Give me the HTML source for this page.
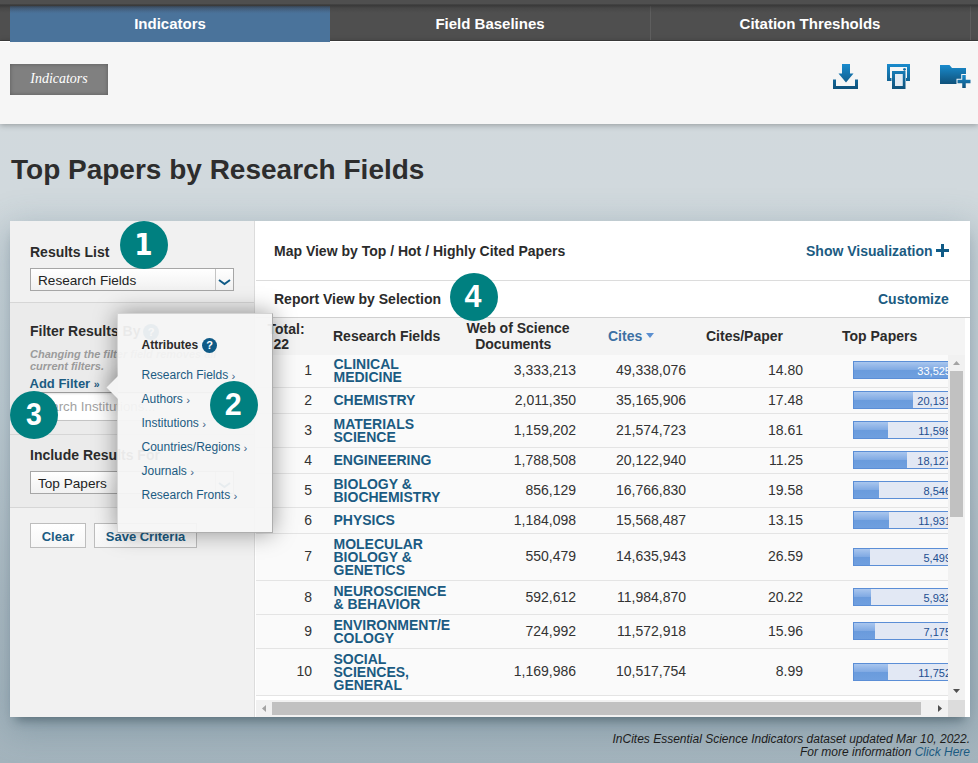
<!DOCTYPE html>
<html>
<head>
<meta charset="utf-8">
<title>Top Papers by Research Fields</title>
<style>
*{box-sizing:border-box;margin:0;padding:0}
html,body{width:978px;height:763px;overflow:hidden}
body{font-family:"Liberation Sans",Arial,sans-serif;color:#2b2b2b;position:relative;
background:linear-gradient(180deg,#d2d9dd 0px,#d1d9dd 200px,#c5d0d6 400px,#b0bdc5 600px,#a4b4bd 763px);}
.abs{position:absolute}
a{color:#1b5b82;text-decoration:none}
#topstrip{left:0;top:3.500px;width:978px;height:9px;background:linear-gradient(rgba(40,40,40,.15) 0,rgba(40,40,40,.55) 1px,rgba(40,40,40,.5) 2px,rgba(40,40,40,.2) 4px,rgba(40,40,40,0) 9px);z-index:3}
#tabbar{left:0;top:0;width:978px;height:41px;background:#4f4f4f;border-bottom:1px solid #3e3e3e}
.tab{top:6px;height:34px;width:320px;text-align:center;color:#fff;font-weight:bold;font-size:15px;line-height:35px}
.tab.active{background:linear-gradient(#46607d 0,#4a6f96 5px,#4a739b 8px);height:36px;z-index:2}
.tabsep{top:6px;height:34px;width:1px;background:#5e5e5e}
#whitebar{left:0;top:41px;width:978px;height:83px;background:#f6f6f6;border-top:1px solid #fff;box-shadow:0 1px 6px rgba(0,0,0,.3)}
#badge{left:10px;top:64px;width:98px;height:31px;background:#808080;color:#fff;font-family:"Liberation Serif",serif;font-style:italic;font-size:14px;line-height:30px;text-align:center;box-shadow:inset 0 0 4px rgba(0,0,0,.3)}
h1{left:11px;top:151.500px;font-size:28px;line-height:36px;font-weight:bold;color:#2d2d2d;white-space:nowrap}
#panel{left:10px;top:221px;width:960px;height:496px;background:#fff;box-shadow:0 9px 10px -6px rgba(20,40,50,.42),0 10px 34px 4px rgba(60,95,115,.3)}
#side{left:0;top:0;width:245px;height:496px;background:#f1f1f1;border-right:1px solid #dcdcdc}
#side .mid{left:0;top:82px;width:244px;height:204px;background:#ebebeb}
.lbl{font-weight:bold;font-size:14px;line-height:16px;color:#2b2b2b;white-space:nowrap}
.sel{left:20px;width:204px;height:23px;border:1px solid #a6a6a6;background:linear-gradient(#fff,#f1f1f1);font-size:13.6px;line-height:23px;padding-left:7px;color:#222;white-space:nowrap}
.sel .arr{position:absolute;right:0;top:0;width:18px;height:21px;border-left:1px solid #c4c4c4}
.sel svg{position:absolute;left:2px;top:9.700px}
.hr{left:0;width:244px;height:1px;background:#d6d6d6}
.btn{height:25px;border:1px solid #bdbdbd;background:linear-gradient(#fff,#f6f6f6);color:#1b5b82;font-weight:bold;font-size:13px;line-height:25px;text-align:center}
.circle span{display:inline-block}
.circle .lib{font-family:"Liberation Sans",sans-serif;font-size:30.500px}
.circle{width:48px;height:48px;border-radius:50%;background:#008080;color:#fff;font-weight:bold;font-size:30px;line-height:48px;text-align:center;font-family:"DejaVu Sans","Liberation Sans",sans-serif;z-index:20}
#pop{left:107px;top:92px;width:156px;height:220px;background:rgba(245,245,245,.94);box-shadow:0 0 22px rgba(0,0,0,.4);border:1px solid rgba(150,150,150,.75);border-left-color:rgba(150,150,150,.3);border-top-color:rgba(150,150,150,.35);z-index:10}
#pop .t{left:23.500px;top:24px;font-weight:bold;font-size:12px;line-height:14px;color:#2b2b2b}
#pop a{position:absolute;left:23.500px;margin-top:0;font-size:12px;line-height:14px;color:#1b5b82;white-space:nowrap}
#pop a span{font-size:11.500px;color:#3d5f85;position:relative;top:1px}
#poparrow{left:78px;top:133px;width:30px;height:66px;z-index:11;overflow:hidden}
#poparrow i{position:absolute;left:21.500px;top:24.500px;width:17px;height:17px;background:#f4f4f4;transform:rotate(45deg);box-shadow:0 0 22px rgba(0,0,0,.45)}
#main{left:246px;top:0;width:714px;height:496px;background:#fff}
.mh{font-weight:bold;font-size:14px;line-height:16px;white-space:nowrap}
#thead{left:0;top:96px;width:709px;height:38px;background:#f4f4f4;border-top:1px solid #d0d0d0}
#thead .h{position:absolute;font-weight:bold;font-size:14px;line-height:16px;color:#2b2b2b;white-space:nowrap}
#rows{left:0;top:0;width:692px;height:479px;overflow:hidden}
.row{position:absolute;left:-246px;width:938px;border-bottom:1px solid #e4e4e4;background:#fafafa;font-size:14px;color:#333}
.row span{position:absolute;top:0;text-align:right;white-space:nowrap}
.row .n{left:246px;width:56px}
.row .f{position:absolute;left:323.500px;font-weight:bold;font-size:14px;line-height:13px;color:#1b5b82;white-space:nowrap}
.row .d{left:446px;width:120px}
.row .ci{left:556px;width:120px}
.row .cp{left:673px;width:120px}
.bar{position:absolute;left:843px;width:110px;height:18px;border:1px solid #5b8ed6;background:#e2e8f4;font-size:12px}
.bar i{position:absolute;left:0;top:0;height:16px;background:linear-gradient(#a9c6ee 0%,#7fa9e3 50%,#6a9bdc 50%,#6f9fdf 100%)}
.bar b{position:absolute;right:11px;top:0;font-weight:normal;font-size:11px;line-height:18px;color:#1d4e8f}
.bar.full b{color:#fff}
#vscroll{left:692px;top:134px;width:17px;height:345px;background:#f1f1f1}
#hscroll{left:0;top:479px;width:692px;height:17px;background:#f1f1f1}
#foot{right:8px;top:732.500px;text-align:right;font-style:italic;font-size:12px;line-height:13.500px;color:#1c1c1c;white-space:nowrap}
</style>
</head>
<body>
<div id="tabbar" class="abs"></div>
<div id="topstrip" class="abs"></div>
<div id="whitebar" class="abs"></div>
<div class="abs tab active" style="left:10px">Indicators</div>
<div class="abs tab" style="left:330px">Field Baselines</div>
<div class="abs tab" style="left:650px">Citation Thresholds</div>
<div class="abs tabsep" style="left:650px"></div>
<div class="abs tabsep" style="left:970px"></div>
<div id="badge" class="abs">Indicators</div>

<svg class="abs" style="left:830px;top:60px" width="145" height="34" viewBox="0 0 145 34">
  <defs>
    <linearGradient id="g" x1="0" y1="0" x2="0" y2="1"><stop offset="0" stop-color="#1a8bcd"/><stop offset="1" stop-color="#0f517a"/></linearGradient>
  </defs>
  <!-- download -->
  <path fill="url(#g)" d="M12 4h8v9.500h3.500L16 22.500 8.500 13.500H12z M3 19.500h3v6.500h19v-6.500h3V29H3z"/>
  <!-- print -->
  <path fill="url(#g)" fill-rule="evenodd" d="M57 4h23v17h-4v-3h1V7H60v11h1.500v3H57z M62 11h13.500v18H62z M65 14v12h7.500V14z"/>
  <rect x="65" y="14" width="7.500" height="12" fill="#e4ebf3"/>
  <circle cx="74.500" cy="9.300" r="1.400" fill="url(#g)"/>
  <!-- folder -->
  <path fill="url(#g)" d="M110 5h9.500l2.500 3h14v16H110z"/>
  <path fill="url(#g)" d="M132.250 15h3.500v4.750h4.750v3.500h-4.750V28h-3.500v-4.750h-4.750v-3.500h4.750z" stroke="#f6f6f6" stroke-width="2" paint-order="stroke"/>
</svg>

<h1 class="abs">Top Papers by Research Fields</h1>

<div id="panel" class="abs">
  <div id="side" class="abs">
    <div class="abs mid"></div>
    <div class="abs lbl" style="left:20px;top:23px">Results List</div>
    <div class="abs sel" style="top:47px">Research Fields<div class="arr"><svg width="13" height="7" viewBox="0 0 13 7"><path d="M1 1l5.500 4L12 1" fill="none" stroke="#0f5a86" stroke-width="2"/></svg></div></div>
    <div class="abs hr" style="top:81px"></div>
    <div class="abs lbl" style="left:20px;top:102px">Filter Results By</div>
    <div class="abs" style="left:133px;top:103px;width:16px;height:16px;border-radius:50%;background:#0f5a86;color:#fff;font-weight:bold;font-size:11px;line-height:16px;text-align:center">?</div>
    <div class="abs" style="left:20px;top:127px;font-style:italic;font-weight:bold;font-size:11px;line-height:12px;color:#9b9b9b;white-space:nowrap">Changing the filter field removes all<br>current filters.</div>
    <a class="abs lbl" style="left:19.500px;top:155px;color:#1b5b82;font-size:13px">Add Filter <span style="font-size:10.500px;position:relative;top:-0.500px">»</span></a>
    <div class="abs" style="left:20px;top:171px;width:204px;height:29px;border:1px solid #c4c4c4;border-top-color:#9a9a9a;background:#fff;box-shadow:inset 0 1px 2px rgba(0,0,0,.12);font-size:13.300px;line-height:27px;padding-left:4px;color:#a2a2a2;white-space:nowrap;overflow:hidden">Search Institutions...</div>
    <div class="abs hr" style="top:213px"></div>
    <div class="abs lbl" style="left:20px;top:226px">Include Results For</div>
    <div class="abs sel" style="top:250px">Top Papers<div class="arr"><svg width="13" height="7" viewBox="0 0 13 7"><path d="M1 1l5.500 4L12 1" fill="none" stroke="#0f5a86" stroke-width="2"/></svg></div></div>
    <div class="abs hr" style="top:286px"></div>
    <div class="abs btn" style="left:20px;top:302px;width:56px">Clear</div>
    <div class="abs btn" style="left:84px;top:302px;width:103px">Save Criteria</div>
  </div>

  <div id="main" class="abs">
    <div class="abs mh" style="left:18px;top:22px">Map View by Top / Hot / Highly Cited Papers</div>
    <a class="abs mh" style="left:550px;top:22px">Show Visualization</a>
    <svg class="abs" style="left:680px;top:23px" width="13" height="13" viewBox="0 0 13 13"><path d="M5 0h3v5h5v3H8v5H5V8H0V5h5z" fill="#0f5a86"/></svg>
    <div class="abs" style="left:0;top:59px;width:714px;height:1px;background:#dcdcdc"></div>
    <div class="abs mh" style="left:18px;top:70px">Report View by Selection</div>
    <a class="abs mh" style="left:622px;top:70px">Customize</a>
    <div class="abs" style="left:0;top:96px;width:714px;height:1px;background:#d0d0d0"></div>
    <div id="rows" class="abs">
    <div class="row" style="top:133px;height:34px">
      <span class="n" style="top:0px;line-height:33px">1</span>
      <a class="f" style="top:3.5px">CLINICAL<br>MEDICINE</a>
      <span class="d" style="top:0px;line-height:33px">3,333,213</span>
      <span class="ci" style="top:0px;line-height:33px">49,338,076</span>
      <span class="cp" style="top:0px;line-height:33px">14.80</span>
      <div class="bar full" style="top:7px"><i style="width:98px"></i><b>33,525</b></div>
    </div>
    <div class="row" style="top:167px;height:26px">
      <span class="n" style="top:0px;line-height:25px">2</span>
      <a class="f" style="top:5.5px">CHEMISTRY</a>
      <span class="d" style="top:0px;line-height:25px">2,011,350</span>
      <span class="ci" style="top:0px;line-height:25px">35,165,906</span>
      <span class="cp" style="top:0px;line-height:25px">17.48</span>
      <div class="bar" style="top:3px"><i style="width:59px"></i><b>20,131</b></div>
    </div>
    <div class="row" style="top:193px;height:34px">
      <span class="n" style="top:0px;line-height:33px">3</span>
      <a class="f" style="top:3.5px">MATERIALS<br>SCIENCE</a>
      <span class="d" style="top:0px;line-height:33px">1,159,202</span>
      <span class="ci" style="top:0px;line-height:33px">21,574,723</span>
      <span class="cp" style="top:0px;line-height:33px">18.61</span>
      <div class="bar" style="top:7px"><i style="width:34px"></i><b>11,598</b></div>
    </div>
    <div class="row" style="top:227px;height:26px">
      <span class="n" style="top:0px;line-height:25px">4</span>
      <a class="f" style="top:5.5px">ENGINEERING</a>
      <span class="d" style="top:0px;line-height:25px">1,788,508</span>
      <span class="ci" style="top:0px;line-height:25px">20,122,940</span>
      <span class="cp" style="top:0px;line-height:25px">11.25</span>
      <div class="bar" style="top:3px"><i style="width:53px"></i><b>18,127</b></div>
    </div>
    <div class="row" style="top:253px;height:34px">
      <span class="n" style="top:0px;line-height:33px">5</span>
      <a class="f" style="top:3.5px">BIOLOGY &amp;<br>BIOCHEMISTRY</a>
      <span class="d" style="top:0px;line-height:33px">856,129</span>
      <span class="ci" style="top:0px;line-height:33px">16,766,830</span>
      <span class="cp" style="top:0px;line-height:33px">19.58</span>
      <div class="bar" style="top:7px"><i style="width:25px"></i><b>8,546</b></div>
    </div>
    <div class="row" style="top:287px;height:26px">
      <span class="n" style="top:0px;line-height:25px">6</span>
      <a class="f" style="top:5.5px">PHYSICS</a>
      <span class="d" style="top:0px;line-height:25px">1,184,098</span>
      <span class="ci" style="top:0px;line-height:25px">15,568,487</span>
      <span class="cp" style="top:0px;line-height:25px">13.15</span>
      <div class="bar" style="top:3px"><i style="width:35px"></i><b>11,931</b></div>
    </div>
    <div class="row" style="top:313px;height:47px">
      <span class="n" style="top:-1px;line-height:46px">7</span>
      <a class="f" style="top:3.5px">MOLECULAR<br>BIOLOGY &amp;<br>GENETICS</a>
      <span class="d" style="top:-1px;line-height:46px">550,479</span>
      <span class="ci" style="top:-1px;line-height:46px">14,635,943</span>
      <span class="cp" style="top:-1px;line-height:46px">26.59</span>
      <div class="bar" style="top:14px"><i style="width:16px"></i><b>5,499</b></div>
    </div>
    <div class="row" style="top:360px;height:34px">
      <span class="n" style="top:0px;line-height:33px">8</span>
      <a class="f" style="top:3.5px">NEUROSCIENCE<br>&amp; BEHAVIOR</a>
      <span class="d" style="top:0px;line-height:33px">592,612</span>
      <span class="ci" style="top:0px;line-height:33px">11,984,870</span>
      <span class="cp" style="top:0px;line-height:33px">20.22</span>
      <div class="bar" style="top:7px"><i style="width:17px"></i><b>5,932</b></div>
    </div>
    <div class="row" style="top:394px;height:34px">
      <span class="n" style="top:0px;line-height:33px">9</span>
      <a class="f" style="top:3.5px">ENVIRONMENT/E<br>COLOGY</a>
      <span class="d" style="top:0px;line-height:33px">724,992</span>
      <span class="ci" style="top:0px;line-height:33px">11,572,918</span>
      <span class="cp" style="top:0px;line-height:33px">15.96</span>
      <div class="bar" style="top:7px"><i style="width:21px"></i><b>7,175</b></div>
    </div>
    <div class="row" style="top:428px;height:47px">
      <span class="n" style="top:-1px;line-height:46px">10</span>
      <a class="f" style="top:3.5px">SOCIAL<br>SCIENCES,<br>GENERAL</a>
      <span class="d" style="top:-1px;line-height:46px">1,169,986</span>
      <span class="ci" style="top:-1px;line-height:46px">10,517,754</span>
      <span class="cp" style="top:-1px;line-height:46px">8.99</span>
      <div class="bar" style="top:14px"><i style="width:34px"></i><b>11,752</b></div>
    </div>
    </div>
    <div id="thead" class="abs">
      <div class="h" style="left:11.500px;top:2.500px">Total:</div><div class="h" style="left:17.500px;top:18px">22</div>
      <div class="h" style="left:77px;top:10px">Research Fields</div>
      <div class="h" style="left:192px;top:2px;width:140px;text-align:center">Web of Science<br>Documents<span style="display:inline-block;width:9.500px"></span></div>
      <div class="h" style="left:352px;top:10px;color:#3c70a4">Cites<svg width="8" height="5" viewBox="0 0 8 5" style="position:relative;top:-3px;margin-left:4px"><path d="M0 0h8L4 5z" fill="#5b8fd0"/></svg></div>
      <div class="h" style="left:450px;top:10px">Cites/Paper</div>
      <div class="h" style="left:586px;top:10px">Top Papers</div>
    </div>
    <div id="vscroll" class="abs">
      <svg class="abs" style="left:5px;top:6px" width="7" height="4" viewBox="0 0 7 4"><path d="M0 4h7L3.500 0z" fill="#a3a3a3"/></svg>
      <div class="abs" style="left:2px;top:16px;width:13px;height:146px;background:#c1c1c1"></div>
      <svg class="abs" style="left:5px;top:334px" width="7" height="4" viewBox="0 0 7 4"><path d="M0 0h7L3.500 4z" fill="#505050"/></svg>
    </div>
    <div id="hscroll" class="abs">
      <svg class="abs" style="left:5.500px;top:5px" width="4" height="7" viewBox="0 0 4 7"><path d="M4 0v7L0 3.500z" fill="#a3a3a3"/></svg>
      <div class="abs" style="left:16px;top:2px;width:649px;height:13px;background:#c1c1c1"></div>
      <svg class="abs" style="left:682px;top:5px" width="4" height="7" viewBox="0 0 4 7"><path d="M0 0v7l4-3.500z" fill="#505050"/></svg>
    </div>
    <div class="abs" style="left:692px;top:479px;width:17px;height:17px;background:#dcdcdc"></div>
  </div>

  <div id="pop" class="abs">
    <div class="abs t">Attributes</div>
    <div class="abs" style="left:84px;top:24px;width:15px;height:15px;border-radius:50%;background:#0f5a86;color:#fff;font-weight:bold;font-size:11px;line-height:15px;text-align:center">?</div>
    <a style="top:54px">Research Fields <span>›</span></a>
    <a style="top:78px">Authors <span>›</span></a>
    <a style="top:102px">Institutions <span>›</span></a>
    <a style="top:126px">Countries/Regions <span>›</span></a>
    <a style="top:150px">Journals <span>›</span></a>
    <a style="top:174px">Research Fronts <span>›</span></a>
  </div>
  <div id="poparrow" class="abs"><i></i></div>

  <div class="abs circle" style="left:110px;top:0px"><span style="transform:translateX(-1px) scaleX(.88)">1</span></div>
  <div class="abs circle" style="left:200px;top:160px"><span class="lib" style="transform:translate(-.7px,-1px)">2</span></div>
  <div class="abs circle" style="left:0px;top:170px"><span class="lib" style="transform:translate(-.7px,-.7px) scaleX(.93)">3</span></div>
  <div class="abs circle" style="left:440px;top:52px"><span class="lib" style="transform:translate(-1px,-1px)">4</span></div>
</div>

<div id="foot" class="abs">InCites Essential Science Indicators dataset updated Mar 10, 2022.<br>For more information <a>Click Here</a></div>

</body>
</html>
